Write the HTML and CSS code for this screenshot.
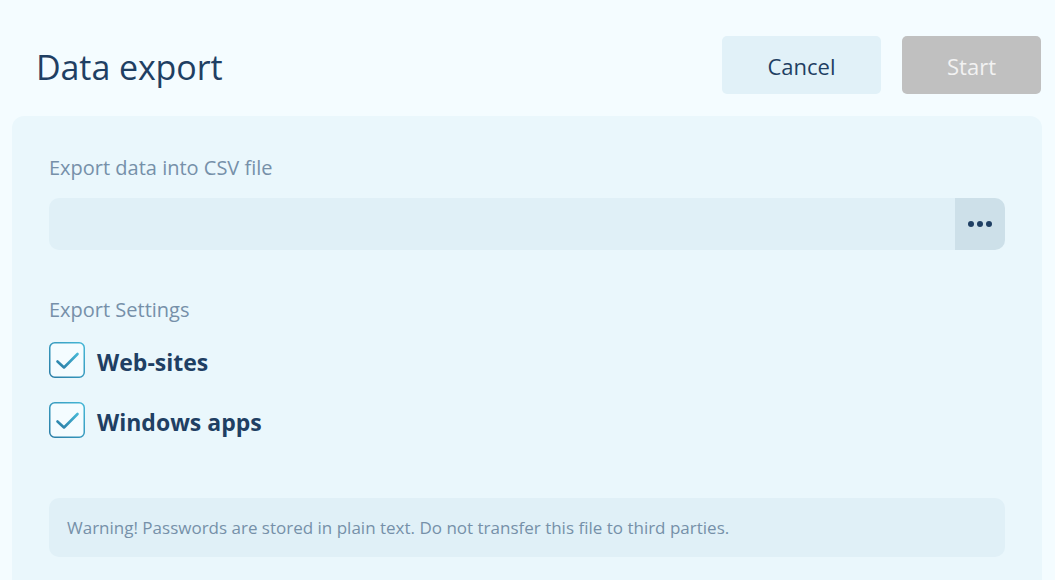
FILE: index.html
```html
<!DOCTYPE html>
<html lang="en">
<head>
<meta charset="utf-8">
<title>Data export</title>
<link rel="stylesheet" href="styles.css">
</head>
<body>
<div class="page">
  <header class="header">
    <h1 class="title">Data export</h1>
    <div class="actions">
      <button class="btn btn-cancel">Cancel</button>
      <button class="btn btn-start" disabled>Start</button>
    </div>
  </header>
  <section class="panel">
    <div class="label">Export data into CSV file</div>
    <div class="file-input">
      <div class="file-field"></div>
      <button class="file-btn" aria-label="Browse">
        <span class="dot"></span><span class="dot"></span><span class="dot"></span>
      </button>
    </div>
    <div class="label settings-label">Export Settings</div>
    <label class="check-row">
      <span class="checkbox">
        <svg viewBox="0 0 36 36" width="36" height="36">
          <defs>
            <linearGradient id="g1" x1="1" y1="0" x2="0" y2="1">
              <stop offset="0" stop-color="#45b7d6"/>
              <stop offset="1" stop-color="#2a7da6"/>
            </linearGradient>
          </defs>
          <rect x="0.75" y="0.75" width="34.5" height="34.5" rx="5" fill="#f4fcff" stroke="url(#g1)" stroke-width="1.5"/>
          <path d="M8.5 19.5 L15 25.5 L28.5 12" fill="none" stroke="url(#g1)" stroke-width="2.6" stroke-linecap="round" stroke-linejoin="round"/>
        </svg>
      </span>
      <span class="check-text">Web-sites</span>
    </label>
    <label class="check-row">
      <span class="checkbox">
        <svg viewBox="0 0 36 36" width="36" height="36">
          <rect x="0.75" y="0.75" width="34.5" height="34.5" rx="5" fill="#f4fcff" stroke="url(#g1)" stroke-width="1.5"/>
          <path d="M8.5 19.5 L15 25.5 L28.5 12" fill="none" stroke="url(#g1)" stroke-width="2.6" stroke-linecap="round" stroke-linejoin="round"/>
        </svg>
      </span>
      <span class="check-text">Windows apps</span>
    </label>
    <div class="warning">Warning! Passwords are stored in plain text. Do not transfer this file to third parties.</div>
  </section>
</div>
</body>
</html>
```
FILE: styles.css
```css
* { box-sizing: border-box; }
html, body {
  margin: 0;
  padding: 0;
  background: #f4fcff;
  font-family: "Open Sans", "Noto Sans", sans-serif;
  overflow: hidden;
}
.page {
  width: 1055px;
  height: 580px;
}
.header {
  display: flex;
  align-items: flex-start;
  justify-content: space-between;
  height: 116px;
  padding: 36px 14px 0 36px;
}
.title {
  margin: 9px 0 0 0;
  font-size: 34px;
  font-weight: 400;
  color: #1f3f63;
  line-height: 44px;
  letter-spacing: -0.1px;
}
.actions {
  display: flex;
  gap: 21px;
}
.btn {
  border: none;
  border-radius: 5px;
  font-family: inherit;
  font-size: 22px;
  height: 58px;
  padding: 2px 0 0 0;
}
.btn-cancel {
  width: 159px;
  background: #e1f1f8;
  color: #1f3f63;
}
.btn-start {
  width: 139px;
  background: #c0c0c0;
  color: #f2f2f2;
}
.panel {
  margin: 0 13px 0 12px;
  height: 480px;
  background: #eaf7fc;
  border-radius: 12px 12px 0 0;
  padding: 39px 37px 0 37px;
}
.label {
  font-size: 20px;
  color: #7690a9;
  line-height: 26px;
}
.file-input {
  display: flex;
  margin-top: 17px;
  height: 52px;
  border-radius: 10px;
  overflow: hidden;
}
.file-field {
  flex: 1;
  background: #e0f0f7;
}
.file-btn {
  width: 50px;
  border: none;
  background: #cde0e9;
  display: flex;
  align-items: center;
  justify-content: center;
  gap: 3px;
  padding: 0;
}
.dot {
  width: 6px;
  height: 6px;
  border-radius: 50%;
  background: #1f3f63;
}
.settings-label {
  margin-top: 47px;
}
.check-row {
  display: flex;
  align-items: center;
  gap: 12px;
  height: 36px;
  margin-top: 19px;
}
.check-row + .check-row {
  margin-top: 24px;
}
.checkbox {
  width: 36px;
  height: 36px;
  display: block;
}
.checkbox svg { display: block; }
.check-text {
  font-size: 23px;
  font-weight: 700;
  color: #1f3f63;
  padding-top: 3px;
}
.warning {
  margin-top: 60px;
  height: 59px;
  background: #e0f0f7;
  border-radius: 10px;
  padding: 0 18px;
  display: flex;
  align-items: center;
  font-size: 17px;
  color: #7690a9;
}
```
